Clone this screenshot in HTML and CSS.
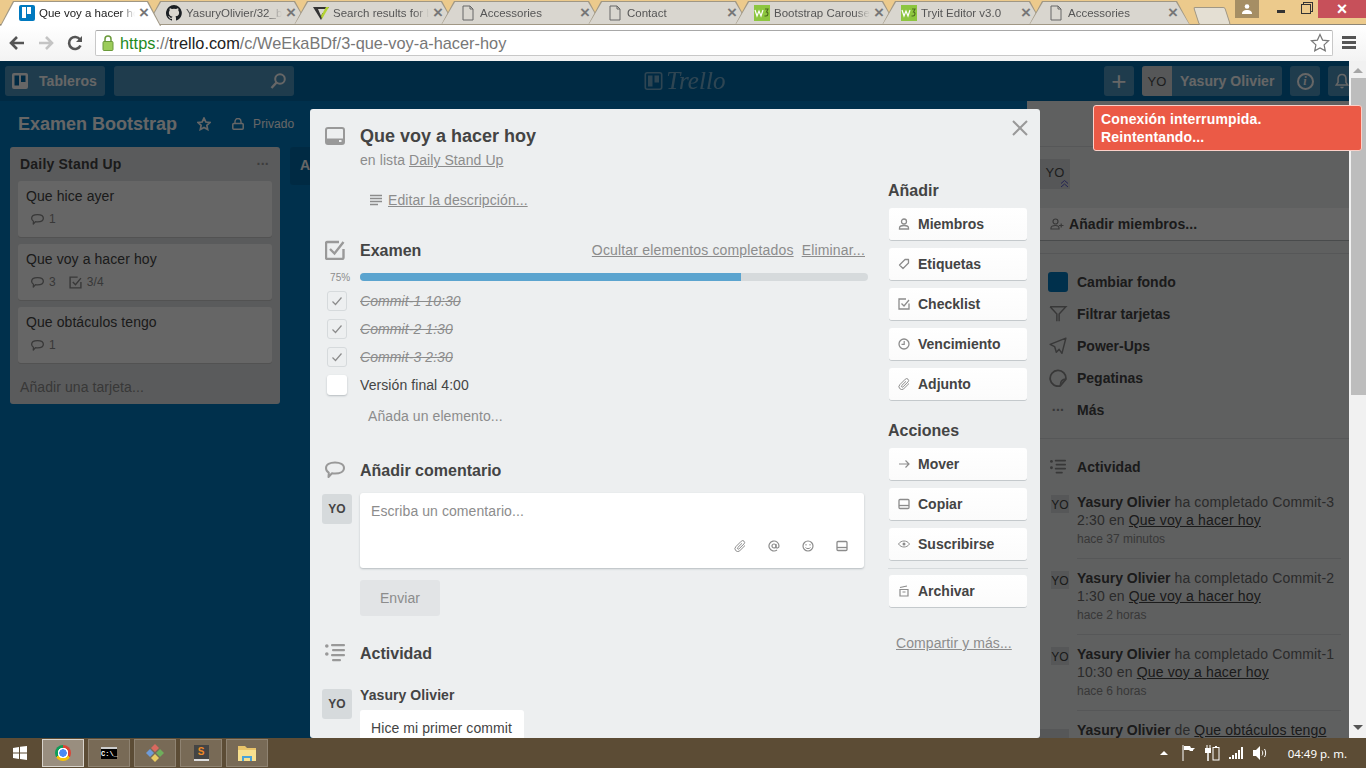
FILE: index.html
```html
<!DOCTYPE html>
<html lang="es">
<head>
	<meta charset="UTF-8">
	<title>Que voy a hacer hoy</title>
	<link rel="stylesheet" href="styles.css">
</head>
<body>
<svg class="sprite" width="0" height="0">
	<symbol id="i-card" viewBox="0 0 20 20"><rect x="1" y="1" width="18" height="16" rx="2" fill="none" stroke="currentColor" stroke-width="2"/><path d="M1 11.500h18V15a2 2 0 0 1-2 2H3a2 2 0 0 1-2-2z" fill="currentColor"/><rect x="14" y="13" width="2.500" height="2" fill="#edeff0"/></symbol>
	<symbol id="i-check" viewBox="0 0 20 20"><path d="M18.500 9v8.500a1.500 1.500 0 0 1-1.500 1.500H2.500A1.500 1.500 0 0 1 1 17.500V3.500A1.500 1.500 0 0 1 2.500 2H14" fill="none" stroke="currentColor" stroke-width="2.400"/><path d="M5 9l4.500 4.500L18.500 2" fill="none" stroke="currentColor" stroke-width="2.400"/></symbol>
	<symbol id="i-bubble" viewBox="0 0 20 20"><path d="M10 2.500c5 0 9 2 9 5.500s-4 5.500-9 5.500c-1 0-2 0-3-.3L3.500 17l.3-4.300C2 11.700 1 10 1 8 1 4.500 5 2.500 10 2.500z" fill="none" stroke="currentColor" stroke-width="2" stroke-linejoin="round"/></symbol>
	<symbol id="i-activity" viewBox="0 0 20 20"><g fill="currentColor"><circle cx="1.800" cy="3" r="1.800"/><circle cx="1.800" cy="11" r="1.800"/><rect x="6" y="1" width="14" height="2.200" rx="1"/><rect x="7" y="6" width="13" height="2.200" rx="1"/><rect x="6" y="11" width="14" height="2.200" rx="1"/><rect x="7" y="16" width="9" height="2.200" rx="1"/></g></symbol>
	<symbol id="i-lines" viewBox="0 0 12 12"><path d="M0 1.500h12M0 4.500h12M0 7.500h12M0 10.500h8" stroke="currentColor" stroke-width="1.500"/></symbol>
	<symbol id="i-person" viewBox="0 0 12 12"><circle cx="6" cy="3.500" r="2.500" fill="none" stroke="currentColor" stroke-width="1.300"/><path d="M1.500 11v-1c0-1.500 1.500-2.500 4.500-2.500s4.500 1 4.500 2.500v1z" fill="none" stroke="currentColor" stroke-width="1.300"/></symbol>
	<symbol id="i-label" viewBox="0 0 12 12"><path d="M7 1.500h3.500V5L5 10.500 1.500 7z" fill="none" stroke="currentColor" stroke-width="1.300" stroke-linejoin="round"/></symbol>
	<symbol id="i-check-sm" viewBox="0 0 12 12"><path d="M11 5.500V11H1V1h7" fill="none" stroke="currentColor" stroke-width="1.300"/><path d="M3.500 5.500l2.500 2.500 5-6" fill="none" stroke="currentColor" stroke-width="1.300"/></symbol>
	<symbol id="i-clock" viewBox="0 0 12 12"><circle cx="6" cy="6" r="5" fill="none" stroke="currentColor" stroke-width="1.300"/><path d="M6.200 3v3.300H3.500" fill="none" stroke="currentColor" stroke-width="1.200"/></symbol>
	<symbol id="i-clip" viewBox="0 0 12 12"><path d="M11 5.500L5.800 10.700a2.800 2.800 0 0 1-4-4L7.300 1.200a1.900 1.900 0 0 1 2.700 2.700L5 8.900a.9.900 0 0 1-1.300-1.300L8 3.300" fill="none" stroke="currentColor"/></symbol>
	<symbol id="i-arrow" viewBox="0 0 12 12"><path d="M1 6h10M7.500 2.500L11 6 7.500 9.500" fill="none" stroke="currentColor" stroke-width="1.200"/></symbol>
	<symbol id="i-copy" viewBox="0 0 12 12"><rect x="1" y="1.500" width="10" height="9" rx="1" fill="none" stroke="currentColor" stroke-width="1.300"/><path d="M1 7.500h10" stroke="currentColor" stroke-width="1.300"/></symbol>
	<symbol id="i-eye" viewBox="0 0 12 12"><path d="M.5 6C2 3.800 4 3 6 3s4 .8 5.500 3C10 8.200 8 9 6 9S2 8.200.5 6z" fill="none" stroke="currentColor"/><circle cx="6" cy="6" r="1.500" fill="currentColor"/></symbol>
	<symbol id="i-archive" viewBox="0 0 12 12"><path d="M2 4.500h8V11H2zM2 2.500l7-1.500M4.500 7h3" fill="none" stroke="currentColor" stroke-width="1.200"/></symbol>
	<symbol id="i-at" viewBox="0 0 12 12"><circle cx="6" cy="6" r="2" fill="none" stroke="currentColor" stroke-width="1.200"/><path d="M8 4v3c0 1.500 3 1.500 3-1a5 5 0 1 0-2 4" fill="none" stroke="currentColor" stroke-width="1.200"/></symbol>
	<symbol id="i-smile" viewBox="0 0 12 12"><circle cx="6" cy="6" r="5" fill="none" stroke="currentColor" stroke-width="1.200"/><path d="M4 4v1.500M8 4v1.500" stroke="currentColor"/><path d="M3.500 7.500c1 1.500 4 1.500 5 0" fill="none" stroke="currentColor"/></symbol>
	<symbol id="i-filter" viewBox="0 0 16 16"><path d="M1 1.500h14L9 8v6.500M7 14.500V8L1 1.500" fill="none" stroke="currentColor" stroke-width="1.300"/></symbol>
	<symbol id="i-rocket" viewBox="0 0 16 16"><path d="M15 1L1 6.500l4 2 1.500 5 2.500-2.500 2.500 3.500z" fill="none" stroke="currentColor" stroke-width="1.300" stroke-linejoin="round"/></symbol>
	<symbol id="i-sticker" viewBox="0 0 16 16"><path d="M10 15A7 7 0 1 1 15 9z" fill="none" stroke="currentColor" stroke-width="1.600" stroke-linejoin="round"/><path d="M15 9c-3 0-5 2-5 6" fill="none" stroke="currentColor" stroke-width="1.400"/></symbol>
	<symbol id="i-person-add" viewBox="0 0 14 12"><circle cx="5.500" cy="3.500" r="2.500" fill="none" stroke="currentColor" stroke-width="1.200"/><path d="M1 11V10c0-1.500 1.500-2.500 4.500-2.500S9 8.500 9 10v1z" fill="none" stroke="currentColor" stroke-width="1.200"/><path d="M9 7.500h4.500M11.200 5.500v4" stroke="currentColor" stroke-width="1.200"/></symbol>
	<symbol id="i-page" viewBox="0 0 16 16"><path d="M3 1h7l3 3v11H3zM10 1v3h3" fill="none" stroke="currentColor"/></symbol>
	<symbol id="i-w3" viewBox="0 0 16 16"><rect width="16" height="16" fill="#8dc63f"/><path d="M1 5l2 6 2-5 2 5 2-6" fill="none" stroke="#fff" stroke-width="1.200"/><path d="M11 4h3l-1.500 3c2 0 2 4-.5 4h-1.500" fill="none" stroke="#4d6b20" stroke-width="1.100"/></symbol>
	<symbol id="i-octocat" viewBox="0 0 16 16"><path fill="#1b1f23" d="M8 0a8 8 0 0 0-2.500 15.600c.4.100.5-.2.500-.4v-1.400c-2.200.500-2.700-1-2.700-1-.4-.9-.9-1.200-.9-1.200-.7-.5.100-.5.100-.5.800.100 1.200.8 1.200.8.700 1.200 1.900.900 2.300.7.100-.5.300-.9.500-1.100-1.800-.2-3.600-.9-3.600-4 0-.9.300-1.600.8-2.100-.1-.2-.4-1 .1-2.100 0 0 .7-.2 2.200.8a7.500 7.500 0 0 1 4 0c1.500-1 2.200-.8 2.200-.8.400 1.100.2 1.900.100 2.100.5.600.8 1.300.8 2.100 0 3.100-1.900 3.700-3.700 3.900.3.300.6.800.6 1.500v2.200c0 .2.100.5.600.4A8 8 0 0 0 8 0z"/></symbol>
</svg>

<div class="tabstrip">
	<div class="tabs">
		<div class="tab tab-active"><span class="favicon fav-trello"><i></i><i></i></span><span class="tab-title">Que voy a hacer hoy</span><span class="tab-x">×</span></div>
		<div class="tab"><svg class="favicon"><use href="#i-octocat"/></svg><span class="tab-title">YasuryOlivier/32_bootstrap</span><span class="tab-x">×</span></div>
		<div class="tab"><svg class="favicon" viewBox="0 0 16 16"><path d="M0 2h16l-1.500 2H5l3 7 1.500-3h2L8 15z" fill="#333"/><path d="M8 11l5-9h3L9 14z" fill="#b4d334"/></svg><span class="tab-title">Search results for bootstrap</span><span class="tab-x">×</span></div>
		<div class="tab"><svg class="favicon"><use href="#i-page"/></svg><span class="tab-title">Accessories</span><span class="tab-x">×</span></div>
		<div class="tab"><svg class="favicon"><use href="#i-page"/></svg><span class="tab-title">Contact</span><span class="tab-x">×</span></div>
		<div class="tab"><svg class="favicon"><use href="#i-w3"/></svg><span class="tab-title">Bootstrap Carousel</span><span class="tab-x">×</span></div>
		<div class="tab"><svg class="favicon"><use href="#i-w3"/></svg><span class="tab-title">Tryit Editor v3.0</span><span class="tab-x">×</span></div>
		<div class="tab"><svg class="favicon"><use href="#i-page"/></svg><span class="tab-title">Accessories</span><span class="tab-x">×</span></div>
		<div class="tab-new"></div>
	</div>
	<div class="win-user"><svg width="10" height="10" viewBox="0 0 10 10"><circle cx="5" cy="2.500" r="2.300" fill="#fff"/><path d="M0 10c0-3 2-4 5-4s5 1 5 4z" fill="#fff"/></svg></div>
	<div class="win-btn"><span class="win-min"></span></div>
	<div class="win-btn"><span class="win-max"></span></div>
	<div class="win-close">×</div>
</div>

<div class="toolbar">
	<svg class="nav" width="18" height="18" viewBox="0 0 18 18"><path d="M16 9H4M9 3L3 9l6 6" fill="none" stroke="#555" stroke-width="2.600"/></svg>
	<svg class="nav" width="18" height="18" viewBox="0 0 18 18"><path d="M2 9h12M9 3l6 6-6 6" fill="none" stroke="#c4c4c4" stroke-width="2.600"/></svg>
	<svg class="nav" width="18" height="18" viewBox="0 0 18 18"><path d="M14.500 11.500A6 6 0 1 1 14 5.500" fill="none" stroke="#555" stroke-width="2.600"/><path d="M16 2v6h-6z" fill="#555"/></svg>
	<div class="omnibox">
		<svg class="lock" width="12" height="16" viewBox="0 0 12 16"><path d="M3 7V4a3 3 0 0 1 6 0v3" fill="none" stroke="#6a9a3a" stroke-width="1.500"/><rect x="1" y="6.500" width="10" height="9" rx="1" fill="#9ccc5a" stroke="#6a9a3a"/></svg>
		<span class="url"><span class="url-https">https</span><span class="url-rest">://</span><span class="url-host">trello.com</span><span class="url-rest">/c/WeEkaBDf/3-que-voy-a-hacer-hoy</span></span>
		<svg class="url-star" width="20" height="20" viewBox="0 0 20 20"><path d="M10 1.500l2.600 5.600 6 .7-4.500 4.100 1.200 6L10 15l-5.300 2.900 1.200-6L1.400 7.800l6-.7z" fill="none" stroke="#777" stroke-width="1.200"/></svg>
	</div>
	<div class="hamburger"><i></i><i></i><i></i></div>
</div>

<div class="page">
	<div class="app">
		<header class="top">
			<div class="top-btn top-boards">
				<svg width="16" height="16" viewBox="0 0 16 16"><rect width="16" height="16" rx="2" fill="#fff"/><rect x="2.500" y="2.500" width="4.500" height="10" fill="#026aa7"/><rect x="9" y="2.500" width="4.500" height="6.500" fill="#026aa7"/></svg>
				<span>Tableros</span>
			</div>
			<div class="top-search">
				<svg width="18" height="18" viewBox="0 0 18 18"><circle cx="11" cy="7" r="4.800" fill="none" stroke="#fff" stroke-width="2"/><path d="M7.500 10.500L2.500 16" stroke="#fff" stroke-width="2.400"/></svg>
			</div>
			<div class="logo">
				<svg width="19" height="18" viewBox="0 0 18 18"><rect x=".8" y=".8" width="16.400" height="16.400" rx="2" fill="none" stroke="#fff" stroke-width="1.600"/><rect x="3.500" y="3.500" width="4.500" height="11" fill="#fff"/><rect x="10" y="3.500" width="4.500" height="7" fill="#fff"/></svg>
				<span>Trello</span>
			</div>
			<div class="top-btn top-plus">+</div>
			<div class="top-btn top-user"><span class="top-avatar">YO</span><span>Yasury Olivier</span></div>
			<div class="top-btn top-info"><span>i</span></div>
			<div class="top-btn top-bell">
				<svg width="16" height="18" viewBox="0 0 16 18"><path d="M8 1.500c3 0 4.500 2 4.500 5v4l2 3h-13l2-3v-4c0-3 1.500-5 4.500-5z" fill="none" stroke="#fff" stroke-width="1.800"/><path d="M6 15.500a2 2 0 0 0 4 0z" fill="#fff"/></svg>
			</div>
		</header>

		<div class="content">
			<main class="board">
				<div class="board-head">
					<h1 class="board-title">Examen Bootstrap</h1>
					<svg class="board-star" width="14" height="14" viewBox="0 0 20 20"><path d="M10 1.500l2.600 5.600 6 .7-4.500 4.100 1.200 6L10 15l-5.300 2.900 1.200-6L1.400 7.800l6-.7z" fill="none" stroke="#fff" stroke-width="2.400"/></svg>
					<svg class="board-lock" width="12" height="12" viewBox="0 0 12 12"><path d="M3 5.500V3.500a3 3 0 0 1 6 0v2" fill="none" stroke="#fff" stroke-width="1.400"/><rect x=".8" y="5.500" width="10.400" height="5.700" rx="1" fill="none" stroke="#fff" stroke-width="1.500"/></svg>
					<span class="board-vis">Privado</span>
				</div>
				<div class="lists">
					<section class="list">
						<div class="list-head"><h2>Daily Stand Up</h2><span class="list-menu">···</span></div>
						<div class="card">
							<div class="card-title">Que hice ayer</div>
							<div class="badges"><span class="badge"><svg><use href="#i-bubble"/></svg>1</span></div>
						</div>
						<div class="card">
							<div class="card-title">Que voy a hacer hoy</div>
							<div class="badges"><span class="badge"><svg><use href="#i-bubble"/></svg>3</span><span class="badge"><svg><use href="#i-check-sm"/></svg>3/4</span></div>
						</div>
						<div class="card">
							<div class="card-title">Que obtáculos tengo</div>
							<div class="badges"><span class="badge"><svg><use href="#i-bubble"/></svg>1</span></div>
						</div>
						<div class="list-add">Añadir una tarjeta...</div>
					</section>
					<section class="list-new">Añadir una lista...</section>
				</div>
			</main>

			<aside class="menu">
				<div class="menu-head"></div>
				<div class="menu-avatar">YO<svg class="menu-chev" width="9" height="10" viewBox="0 0 9 10"><path d="M1 4.500l3.500-3 3.500 3M1 8l3.500-3 3.500 3" fill="none" stroke="#5a5ad0"/></svg></div>
				<div class="menu-invite"><svg><use href="#i-person-add"/></svg>Añadir miembros...</div>
				<div class="menu-rule"></div>
				<ul class="menu-list">
					<li><span class="menu-swatch"></span>Cambiar fondo</li>
					<li><svg><use href="#i-filter"/></svg>Filtrar tarjetas</li>
					<li><svg><use href="#i-rocket"/></svg>Power-Ups</li>
					<li><svg><use href="#i-sticker"/></svg>Pegatinas</li>
					<li><span class="menu-dots">···</span>Más</li>
				</ul>
				<div class="menu-act-head"><svg><use href="#i-activity"/></svg>Actividad</div>
				<div class="act">
					<span class="act-avatar">YO</span>
					<div class="act-body"><b>Yasury Olivier</b> ha completado Commit-3 2:30 en <u>Que voy a hacer hoy</u><div class="act-time">hace 37 minutos</div></div>
				</div>
				<div class="act">
					<span class="act-avatar">YO</span>
					<div class="act-body"><b>Yasury Olivier</b> ha completado Commit-2 1:30 en <u>Que voy a hacer hoy</u><div class="act-time">hace 2 horas</div></div>
				</div>
				<div class="act">
					<span class="act-avatar">YO</span>
					<div class="act-body"><b>Yasury Olivier</b> ha completado Commit-1 10:30 en <u>Que voy a hacer hoy</u><div class="act-time">hace 6 horas</div></div>
				</div>
				<div class="act">
					<span class="act-avatar act-avatar-big">YO</span>
					<div class="act-body"><b>Yasury Olivier</b> de <u>Que obtáculos tengo</u></div>
				</div>
			</aside>
		</div>

		<div class="overlay"></div>

		<div class="modal">
			<span class="modal-close">
				<svg width="16" height="16" viewBox="0 0 16 16"><path d="M1 1l14 14M15 1L1 15" stroke="#999" stroke-width="2"/></svg>
			</span>
			<div class="modal-main">
				<div class="row modal-head">
					<div class="gutter"><svg class="icon-lg icon-card"><use href="#i-card"/></svg></div>
					<div>
						<h2 class="modal-title">Que voy a hacer hoy</h2>
						<div class="modal-sub">en lista <a>Daily Stand Up</a></div>
					</div>
				</div>
				<div class="desc"><svg><use href="#i-lines"/></svg><a>Editar la descripción...</a></div>

				<div class="row heading heading-check">
					<div class="gutter"><svg class="icon-lg"><use href="#i-check"/></svg></div>
					<h3>Examen</h3>
					<div class="heading-links"><a>Ocultar elementos completados</a><a>Eliminar...</a></div>
				</div>
				<div class="row progress">
					<div class="progress-pct">75%</div>
					<div class="progress-bar"><div class="progress-fill" style="width: 75%"></div></div>
				</div>
				<div class="items">
					<div class="item item-done"><span class="box"><svg width="12" height="12" viewBox="0 0 12 12"><path d="M1.500 6.500l3 3 6-7" fill="none" stroke="#8c8c8c" stroke-width="1.200"/></svg></span><span>Commit-1 10:30</span></div>
					<div class="item item-done"><span class="box"><svg width="12" height="12" viewBox="0 0 12 12"><path d="M1.500 6.500l3 3 6-7" fill="none" stroke="#8c8c8c" stroke-width="1.200"/></svg></span><span>Commit-2 1:30</span></div>
					<div class="item item-done"><span class="box"><svg width="12" height="12" viewBox="0 0 12 12"><path d="M1.500 6.500l3 3 6-7" fill="none" stroke="#8c8c8c" stroke-width="1.200"/></svg></span><span>Commit-3 2:30</span></div>
					<div class="item"><span class="box box-open"></span><span>Versión final 4:00</span></div>
				</div>
				<div class="item-add">Añada un elemento...</div>

				<div class="row heading heading-comment">
					<div class="gutter"><svg class="icon-lg"><use href="#i-bubble"/></svg></div>
					<h3>Añadir comentario</h3>
				</div>
				<div class="row comment-new">
					<div class="gutter gutter-avatar"><span class="avatar">YO</span></div>
					<div class="comment-box">
						<div class="comment-hint">Escriba un comentario...</div>
						<div class="comment-tools">
							<svg><use href="#i-clip"/></svg>
							<svg><use href="#i-at"/></svg>
							<svg><use href="#i-smile"/></svg>
							<svg><use href="#i-copy"/></svg>
						</div>
					</div>
				</div>
				<div class="send">Enviar</div>

				<div class="row heading heading-act">
					<div class="gutter"><svg class="icon-lg"><use href="#i-activity"/></svg></div>
					<h3>Actividad</h3>
				</div>
				<div class="row comment">
					<div class="gutter gutter-avatar"><span class="avatar avatar-low">YO</span></div>
					<div>
						<div class="comment-name">Yasury Olivier</div>
						<div class="comment-text">Hice mi primer commit</div>
					</div>
				</div>
			</div>

			<div class="modal-side">
				<h3>Añadir</h3>
				<a class="side-btn"><svg><use href="#i-person"/></svg>Miembros</a>
				<a class="side-btn"><svg><use href="#i-label"/></svg>Etiquetas</a>
				<a class="side-btn"><svg><use href="#i-check-sm"/></svg>Checklist</a>
				<a class="side-btn"><svg><use href="#i-clock"/></svg>Vencimiento</a>
				<a class="side-btn"><svg><use href="#i-clip"/></svg>Adjunto</a>
				<h3 class="side-second">Acciones</h3>
				<a class="side-btn"><svg><use href="#i-arrow"/></svg>Mover</a>
				<a class="side-btn"><svg><use href="#i-copy"/></svg>Copiar</a>
				<a class="side-btn"><svg><use href="#i-eye"/></svg>Suscribirse</a>
				<hr class="side-rule">
				<a class="side-btn"><svg><use href="#i-archive"/></svg>Archivar</a>
				<a class="side-share">Compartir y más...</a>
			</div>
		</div>

		<div class="toast">Conexión interrumpida.<br>Reintentando...</div>
	</div>

	<div class="scrollbar">
		<span class="scroll-up"></span>
		<div class="scroll-thumb"></div>
		<span class="scroll-down"></span>
	</div>
</div>

<footer class="taskbar">
	<svg class="start" width="14" height="14" viewBox="0 0 14 14"><path fill="#fff" d="M0 2l6-1v5.500H0zM7 .8L14 0v6.500H7zM0 7.500h6V13l-6-1zM7 7.500h7V14l-7-1z"/></svg>
	<div class="task task-active"><span class="chrome"></span></div>
	<div class="task"><span class="cmd">C:\_</span></div>
	<div class="task">
		<svg width="18" height="18" viewBox="0 0 18 18"><path fill="#d9695f" d="M9 0l4 4-4 4-4-4z"/><path fill="#6fae5c" d="M14 5l4 4-4 4-4-4z"/><path fill="#6f9bd8" d="M4 5l4 4-4 4-4-4z"/><path fill="#e8cb62" d="M9 10l4 4-4 4-4-4z"/></svg>
	</div>
	<div class="task"><span class="sublime">S</span></div>
	<div class="task">
		<svg width="20" height="18" viewBox="0 0 20 18"><path fill="#e9c46a" d="M1 2h7l2 2h9v13H1z"/><path fill="#f7e08f" d="M1 6h18v11H1z"/><path fill="#4aa3d8" d="M5 17v-5h10v5h-2v-3H7v3z"/></svg>
	</div>
	<div class="tray">
		<span class="tray-up"></span>
		<svg width="14" height="16" viewBox="0 0 14 16"><path d="M1 0v16" stroke="#fff"/><path d="M2 1h6l1 2h4l-2 2 0 1H8L7 5H2z" fill="#fff"/></svg>
		<svg width="15" height="16" viewBox="0 0 15 16"><path d="M2 0v3M5 0v3" stroke="#fff"/><rect x="0" y="3" width="6" height="5" fill="#fff"/><path d="M3 8v8" stroke="#fff" stroke-width="1.500"/><rect x="8" y="2.500" width="6" height="12.500" fill="none" stroke="#fff"/><rect x="10" y="1" width="2" height="1.500" fill="#fff"/></svg>
		<svg width="15" height="12" viewBox="0 0 15 12"><path fill="#fff" d="M0 10h2v2H0zM3 8h2v4H3zM6 6h2v6H6zM9 3h2v9H9zM12 0h2v12h-2z"/></svg>
		<svg width="16" height="14" viewBox="0 0 16 14"><path fill="#fff" d="M0 4h3l4-4v14l-4-4H0z"/><path d="M9 4.500c1 1.500 1 3.500 0 5M11.500 3c1.500 2 1.500 6 0 8" fill="none" stroke="#fff"/></svg>
		<span class="clock">04:49 p. m.</span>
	</div>
</footer>
</body>
</html>
```

FILE: styles.css
```css
* {
	box-sizing: border-box;
}
html, body {
	height: 100%;
}
body {
	margin: 0;
	width: 1366px;
	height: 768px;
	display: flex;
	flex-direction: column;
	overflow: hidden;
	font-family: "Liberation Sans", Arial, sans-serif;
	font-size: 14px;
	letter-spacing: .08px;
	color: #444;
	background: #f1f1f1;
}
h1, h2, h3, ul {
	margin: 0;
	padding: 0;
	list-style: none;
	letter-spacing: 0;
}
.sprite {
	position: absolute;
}

/* browser tabs */
.tabstrip {
	height: 25px;
	flex: none;
	display: flex;
	background: #ecca8c;
	box-shadow: inset 0 -1px 0 #8e8676;
	letter-spacing: 0;
}
.tabs {
	display: flex;
	flex: 1;
	padding-top: 1px;
}
.tab {
	position: relative;
	width: 161px;
	margin-right: -14px;
	display: flex;
	align-items: center;
	padding-left: 19px;
	font-size: 11.5px;
	color: #555;
}
.tab::before, .tab::after {
	content: "";
	position: absolute;
	clip-path: polygon(0 100%, 13px 0, calc(100% - 13px) 0, 100% 100%);
}
.tab::before {
	inset: 0;
	background: #a09784;
}
.tab::after {
	inset: 1px 1px 1px 1px;
	background: #d9d6cf;
}
.tab-active {
	z-index: 2;
	color: #222;
}
.tab-active::before {
	bottom: -1px;
}
.tab-active::after {
	bottom: -1px;
	background: #fff;
}
.tab > * {
	position: relative;
	z-index: 1;
}
.favicon {
	width: 16px;
	height: 16px;
	flex: none;
	color: #666;
}
.fav-trello {
	background: #0079bf;
	border-radius: 2px;
	display: flex;
	gap: 1px;
	padding: 2px 3px;
}
.fav-trello i {
	display: block;
	width: 4px;
	height: 11px;
	background: #fff;
}
.fav-trello i + i {
	height: 7px;
}
.tab-title {
	width: 96px;
	margin-left: 4px;
	white-space: nowrap;
	overflow: hidden;
	-webkit-mask-image: linear-gradient(90deg, #000 85%, transparent);
	mask-image: linear-gradient(90deg, #000 85%, transparent);
}
.tab-x {
	margin-left: 3px;
	width: 12px;
	text-align: center;
	font-size: 17px;
	font-weight: bold;
	color: #777;
	line-height: 16px;
}
.tab-new {
	width: 32px;
	height: 18px;
	margin: 6px 0 0 20px;
	background: #e4dfd3;
	border: 1px solid #a09784;
	border-radius: 2px;
	transform: skewX(18deg);
}
.win-user {
	width: 24px;
	height: 18px;
	margin-right: 9px;
	background: #a58e64;
	display: flex;
	align-items: center;
	justify-content: center;
}
.win-btn {
	width: 25px;
	height: 18px;
	display: flex;
	align-items: center;
	justify-content: center;
}
.win-min {
	width: 8px;
	height: 3px;
	margin-top: 4px;
	background: #333;
}
.win-max {
	width: 10px;
	height: 10px;
	border: 1px solid #333;
	box-shadow: 2px -2px 0 -1px #ecca8c, 2px -2px 0 0 #333;
}
.win-close {
	width: 48px;
	height: 18px;
	background: #c7505a;
	color: #fff;
	font-size: 18px;
	font-weight: bold;
	line-height: 18px;
	text-align: center;
}

/* toolbar */
.toolbar {
	height: 36px;
	flex: none;
	display: flex;
	align-items: flex-start;
	padding: 5px 0 0 8px;
	background: linear-gradient(#fff, #f3f3f3);
	letter-spacing: 0;
}
.nav {
	margin: 4px 11px 0 0;
}
.omnibox {
	width: 1238px;
	height: 26px;
	display: flex;
	align-items: center;
	padding: 0 2px 0 6px;
	background: #fff;
	border: 1px solid #c8c8c8;
	border-top-color: #a8a8a8;
	border-radius: 2px;
}
.lock {
	margin: 0 6px 0 0;
	flex: none;
}
.url {
	flex: 1;
	font-size: 16.34px;
	white-space: nowrap;
}
.url-https {
	color: #1e8a1e;
}
.url-rest {
	color: #777;
}
.url-host {
	color: #222;
}
.hamburger {
	width: 14px;
	margin: 6px 0 0 9px;
}
.hamburger i {
	display: block;
	height: 3px;
	margin-bottom: 2px;
	background: #555;
}

/* trello page */
.page {
	flex: 1;
	min-height: 0;
	display: flex;
}
.app {
	position: relative;
	flex: 1;
	min-width: 0;
	display: flex;
	flex-direction: column;
	background: #0079bf;
}
.top {
	height: 40px;
	flex: none;
	display: flex;
	align-items: center;
	padding: 0 0 0 5px;
	background: #026aa7;
	overflow: hidden;
}
.top-btn {
	height: 30px;
	display: flex;
	align-items: center;
	background: rgba(255, 255, 255, .3);
	border-radius: 3px;
	color: #fff;
	font-weight: bold;
}
.top-boards {
	width: 100px;
	gap: 11px;
	padding-left: 7px;
	font-size: 14px;
}
.top-search {
	width: 180px;
	height: 30px;
	margin-left: 9px;
	background: rgba(255, 255, 255, .3);
	border-radius: 3px;
	display: flex;
	align-items: center;
	justify-content: flex-end;
	padding-right: 7px;
}
.logo {
	flex: 1;
	display: flex;
	align-items: center;
	justify-content: center;
	gap: 3px;
	padding-right: 28px;
	color: #fff;
	font-family: "Liberation Serif", serif;
	font-style: italic;
	font-size: 25px;
	opacity: .45;
}
.top-plus {
	width: 30px;
	justify-content: center;
	font-size: 26px;
	font-weight: normal;
}
.top-user {
	width: 140px;
	margin-left: 8px;
	gap: 8px;
	overflow: hidden;
}
.top-avatar {
	width: 30px;
	height: 30px;
	background: #d6dadc;
	color: #4d4d4d;
	font-size: 13px;
	font-weight: normal;
	display: flex;
	align-items: center;
	justify-content: center;
}
.top-info {
	width: 30px;
	margin-left: 8px;
	justify-content: center;
}
.top-info span {
	width: 17px;
	height: 17px;
	border: 2px solid #fff;
	border-radius: 50%;
	font: italic bold 12px/13px "Liberation Serif", serif;
	text-align: center;
}
.top-bell {
	width: 21px;
	margin-left: 8px;
	padding-left: 7px;
	border-radius: 3px 0 0 3px;
	overflow: hidden;
}

.content {
	flex: 1;
	min-height: 0;
	display: flex;
}
.board {
	flex: 1;
	min-width: 0;
}
.board-head {
	height: 46px;
	display: flex;
	align-items: center;
	padding-left: 18px;
	color: #fff;
}
.board-title {
	font-size: 18px;
	line-height: 24px;
}
.board-star {
	margin-left: 20px;
}
.board-lock {
	margin-left: 21px;
}
.board-vis {
	margin-left: 9px;
	font-size: 12px;
}
.lists {
	display: flex;
	align-items: flex-start;
	gap: 10px;
	padding-left: 10px;
}
.list {
	width: 270px;
	padding: 0 8px;
	background: #e2e4e6;
	border-radius: 3px;
}
.list-head {
	height: 34px;
	display: flex;
	align-items: center;
	justify-content: space-between;
	padding: 0 3px 0 2px;
}
.list-head h2 {
	font-size: 14px;
	line-height: 18px;
	letter-spacing: .2px;
}
.list-menu {
	color: #999;
	font-weight: bold;
	letter-spacing: -.5px;
}
.card {
	height: 56px;
	margin-bottom: 7px;
	padding: 6px 8px;
	background: #fff;
	border-radius: 3px;
	box-shadow: 0 1px 0 #ccc;
}
.card-title {
	line-height: 18px;
}
.badges {
	display: flex;
	gap: 13px;
	margin-top: 5px;
	padding-left: 5px;
	font-size: 12px;
	color: #8c8c8c;
	line-height: 18px;
}
.badge {
	display: flex;
	align-items: center;
	gap: 5px;
}
.badge svg {
	width: 13px;
	height: 13px;
}
.list-add {
	height: 34px;
	margin-top: 7px;
	padding: 7px 2px 0;
	line-height: 20px;
	color: #8c8c8c;
}
.list-new {
	width: 270px;
	height: 38px;
	padding: 10px;
	background: rgba(0, 0, 0, .12);
	border-radius: 3px;
	color: #fff;
	font-weight: bold;
	white-space: nowrap;
}

/* board menu */
.menu {
	width: 322px;
	flex: none;
	background: #edeff0;
	overflow: hidden;
}
.menu-head {
	height: 46px;
	border-bottom: 1px solid #d6dadc;
}
.menu-avatar {
	position: relative;
	width: 30px;
	height: 30px;
	margin: 12px 0 0 13px;
	background: #d6dadc;
	color: #4d4d4d;
	font-size: 13px;
	line-height: 28px;
	text-align: center;
}
.menu-chev {
	position: absolute;
	right: 1px;
	bottom: 0;
}
.menu-invite {
	height: 33px;
	margin-top: 19px;
	padding-left: 23px;
	display: flex;
	align-items: center;
	gap: 5px;
	background: #fff;
	border-bottom: 1px solid #b6bbbf;
	font-weight: bold;
}
.menu-invite svg {
	width: 14px;
	height: 12px;
	color: #8c8c8c;
}
.menu-rule {
	height: 1px;
	margin-top: 12px;
	background: #d6dadc;
}
.menu-list {
	padding: 12px 0 12px;
	border-bottom: 1px solid #d6dadc;
}
.menu-list li {
	height: 32px;
	display: flex;
	align-items: center;
	gap: 9px;
	padding-left: 21px;
	font-weight: bold;
}
.menu-list svg {
	width: 20px;
	height: 18px;
	color: #8c8c8c;
}
.menu-swatch {
	width: 20px;
	height: 20px;
	background: #0079bf;
	border-radius: 3px;
}
.menu-dots {
	width: 20px;
	color: #8c8c8c;
	text-align: center;
	letter-spacing: -.5px;
}
.menu-act-head {
	height: 24px;
	margin-top: 16px;
	display: flex;
	align-items: center;
	gap: 11px;
	padding-left: 23px;
	font-weight: bold;
}
.menu-act-head svg {
	width: 16px;
	height: 16px;
	color: #8c8c8c;
}
.act {
	display: flex;
	margin-top: 14px;
}
.act + .act {
	margin-top: 10px;
}
.act-avatar {
	width: 18px;
	height: 18px;
	margin: 2px 8px 0 24px;
	flex: none;
	background: #d6dadc;
	font-size: 12px;
	line-height: 20px;
	text-align: center;
}
.act-avatar-big {
	width: 30px;
	height: 30px;
	margin: 8px 8px 0 12px;
	line-height: 30px;
	font-size: 13px;
}
.act-body {
	width: 264px;
	padding-bottom: 10px;
	border-bottom: 1px solid #d6dadc;
	line-height: 18px;
	letter-spacing: .15px;
	color: #6b6b6b;
}
.act-body b {
	color: #444;
	letter-spacing: 0;
}
.act-body u {
	color: #444;
}
.act-time {
	margin-top: 1px;
	font-size: 12px;
	letter-spacing: 0;
	color: #8c8c8c;
}

.overlay {
	position: absolute;
	inset: 0;
	background: rgba(0, 0, 0, .6);
}

/* card window */
.modal {
	position: absolute;
	left: 310px;
	top: 48px;
	width: 730px;
	bottom: 0;
	display: flex;
	background: #edeff0;
	border-radius: 3px;
	overflow: hidden;
}
.modal-close {
	position: absolute;
	right: 12px;
	top: 11px;
}
.modal-main {
	width: 570px;
	flex: none;
	padding: 16px 12px 0 0;
}
.modal-side {
	width: 140px;
	margin-left: 8px;
	padding-top: 71px;
}
.row {
	display: flex;
}
.gutter {
	width: 50px;
	flex: none;
	padding-left: 15px;
	color: #999;
}
.gutter-avatar {
	padding-left: 12px;
}
.icon-lg {
	display: block;
	width: 20px;
	height: 20px;
}
.icon-card {
	margin-top: 2px;
}
.modal-title {
	font-size: 18px;
	line-height: 22px;
}
.modal-sub {
	margin-top: 3px;
	line-height: 20px;
	color: #8c8c8c;
}
.modal-sub a, .desc a, .heading-links a, .side-share {
	color: #8c8c8c;
	text-decoration: underline;
}
.desc {
	height: 20px;
	margin-top: 20px;
	padding-left: 60px;
	display: flex;
	align-items: center;
	gap: 6px;
}
.desc svg {
	width: 12px;
	height: 12px;
	color: #8c8c8c;
}
.heading {
	height: 24px;
	align-items: center;
}
.heading h3 {
	padding-top: 1px;
	font-size: 16px;
	line-height: 20px;
}
.heading-check {
	margin-top: 28px;
}
.heading-links {
	margin-left: auto;
	margin-right: 3px;
	display: flex;
	gap: 8px;
	letter-spacing: .17px;
}
.progress {
	height: 10px;
	margin-top: 10px;
	align-items: center;
}
.progress-pct {
	width: 50px;
	padding-left: 20px;
	font-size: 10px;
	color: #8c8c8c;
}
.progress-bar {
	flex: 1;
	height: 8px;
	background: #d6dadc;
	border-radius: 4px;
	overflow: hidden;
}
.progress-fill {
	height: 100%;
	background: #5ba4cf;
}
.items {
	margin-top: 5px;
}
.item {
	height: 28px;
	display: flex;
	align-items: center;
	padding-left: 17px;
	gap: 13px;
}
.item-done {
	color: #8c8c8c;
	font-style: italic;
	text-decoration: line-through;
}
.box {
	width: 20px;
	height: 20px;
	display: flex;
	align-items: center;
	justify-content: center;
	border: 1px solid #d6dadc;
	border-radius: 3px;
}
.box-open {
	background: #fff;
	border: 0;
	box-shadow: 0 1px 2px #b6bbbf;
}
.item-add {
	height: 20px;
	margin-top: 7px;
	padding-left: 58px;
	line-height: 20px;
	color: #8c8c8c;
}
.heading-comment {
	margin-top: 32px;
}
.comment-new {
	margin-top: 11px;
}
.avatar {
	display: block;
	width: 30px;
	height: 30px;
	margin-top: 1px;
	background: #d6dadc;
	border-radius: 3px;
	color: #444;
	font-size: 12px;
	font-weight: bold;
	line-height: 30px;
	text-align: center;
}
.avatar-low {
	margin-top: 4px;
}
.comment-box {
	width: 504px;
	height: 75px;
	padding: 9px 11px;
	background: #fff;
	border-radius: 3px;
	box-shadow: 0 1px 2px #b6bbbf;
}
.comment-hint {
	line-height: 18px;
	color: #8c8c8c;
}
.comment-tools {
	display: flex;
	justify-content: flex-end;
	gap: 22px;
	margin-top: 20px;
	padding-right: 5px;
	color: #8c8c8c;
}
.comment-tools svg {
	width: 12px;
	height: 12px;
}
.send {
	width: 80px;
	height: 36px;
	margin: 12px 0 0 50px;
	background: #e2e4e6;
	border-radius: 3px;
	color: #8c8c8c;
	line-height: 36px;
	text-align: center;
}
.heading-act {
	margin-top: 25px;
}
.comment {
	margin-top: 20px;
}
.comment-name {
	font-weight: bold;
	line-height: 20px;
}
.comment-text {
	width: 164px;
	height: 40px;
	margin-top: 5px;
	padding: 10px 11px;
	background: #fff;
	border-radius: 3px;
	white-space: nowrap;
}
.modal-side h3 {
	padding-top: 1px;
	font-size: 16px;
	line-height: 20px;
	margin-bottom: 7px;
}
.modal-side .side-second {
	margin-top: 20px;
}
.side-btn {
	display: flex;
	align-items: center;
	gap: 8px;
	width: 138px;
	height: 32px;
	margin: 0 0 8px 1px;
	padding-left: 9px;
	background: linear-gradient(#fff, #fbfbfb);
	border-radius: 3px;
	box-shadow: 0 1px 0 #c4c9cc;
	font-weight: bold;
	letter-spacing: 0;
}
.side-btn svg {
	width: 12px;
	height: 12px;
	flex: none;
	color: #8c8c8c;
}
.side-rule {
	width: 140px;
	height: 1px;
	margin: 0 0 6px;
	border: 0;
	background: #d6dadc;
}
.side-share {
	display: block;
	margin: 26px 0 0 8px;
	line-height: 20px;
}

.toast {
	position: absolute;
	z-index: 5;
	left: 1093px;
	top: 44px;
	width: 269px;
	height: 46px;
	padding: 4px 7px;
	background: #eb5a46;
	border: 1px solid #fbd0c8;
	border-radius: 3px;
	color: #fff;
	font-weight: bold;
	line-height: 18px;
	letter-spacing: .15px;
}

/* page scrollbar */
.scrollbar {
	width: 17px;
	flex: none;
	display: flex;
	flex-direction: column;
	align-items: flex-end;
	padding-top: 17px;
	background: #f1f1f1;
	position: relative;
}
.scroll-thumb {
	width: 15px;
	height: 317px;
	background: #bdbdbd;
}
.scroll-up, .scroll-down {
	position: absolute;
	left: 4px;
	border: 5px solid transparent;
}
.scroll-up {
	top: 2px;
	border-bottom-color: #a6a6a6;
}
.scroll-down {
	bottom: 3px;
	border-top-color: #555;
}

/* windows taskbar */
.taskbar {
	height: 30px;
	flex: none;
	display: flex;
	align-items: center;
	gap: 4px;
	padding-left: 13px;
	background: #5c4c35;
	letter-spacing: 0;
}
.start {
	margin-right: 11px;
}
.task {
	width: 42px;
	height: 28px;
	display: flex;
	align-items: center;
	justify-content: center;
	background: #786a56;
	border: 1px solid #8f8372;
}
.task-active {
	background: #998e7f;
	border-color: #d8d3cb;
}
.chrome {
	width: 16px;
	height: 16px;
	border-radius: 50%;
	background:
		radial-gradient(circle, #4a8af4 0 3.500px, #fff 4px 5px, transparent 5.500px),
		conic-gradient(#db4437 0 33%, #f4c20d 33% 66%, #0f9d58 66%);
}
.cmd {
	width: 16px;
	height: 12px;
	background: #000;
	border-top: 2px solid #ccc;
	color: #fff;
	font: bold 7px/10px "Liberation Mono", monospace;
}
.sublime {
	width: 15px;
	height: 16px;
	background: #444;
	border-bottom: 2px solid #ddd;
	color: #f08a24;
	font-size: 10px;
	font-weight: bold;
	line-height: 14px;
	text-align: center;
}
.tray {
	margin-left: auto;
	display: flex;
	align-items: center;
	gap: 9px;
	padding-right: 19px;
	color: #fff;
}
.tray-up {
	margin-right: 5px;
	border: 4px solid transparent;
	border-bottom: 4px solid #fff;
	border-top: 0;
}
.clock {
	margin-left: 10px;
	font-family: "Noto Sans", sans-serif;
	font-size: 11.5px;
}
```
